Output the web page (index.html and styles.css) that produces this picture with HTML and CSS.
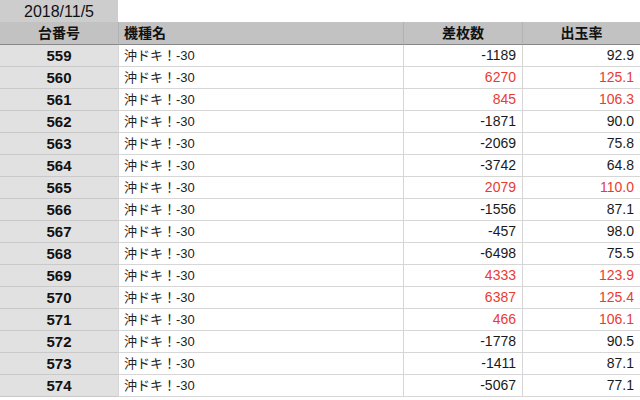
FILE: index.html
```html
<!DOCTYPE html>
<html lang="ja">
<head>
<meta charset="utf-8">
<link rel="stylesheet" href="styles.css">
</head>
<body>
<div class="date">2018/11/5</div>
<div class="sheet">
  <div class="row head"><div class="c1">台番号</div><div class="c2">機種名</div><div class="c3">差枚数</div><div class="c4">出玉率</div></div>
  <div class="row"><div class="c1">559</div><div class="c2">沖ドキ！-30</div><div class="c3">-1189</div><div class="c4">92.9</div></div>
  <div class="row plus"><div class="c1">560</div><div class="c2">沖ドキ！-30</div><div class="c3">6270</div><div class="c4">125.1</div></div>
  <div class="row plus"><div class="c1">561</div><div class="c2">沖ドキ！-30</div><div class="c3">845</div><div class="c4">106.3</div></div>
  <div class="row"><div class="c1">562</div><div class="c2">沖ドキ！-30</div><div class="c3">-1871</div><div class="c4">90.0</div></div>
  <div class="row"><div class="c1">563</div><div class="c2">沖ドキ！-30</div><div class="c3">-2069</div><div class="c4">75.8</div></div>
  <div class="row"><div class="c1">564</div><div class="c2">沖ドキ！-30</div><div class="c3">-3742</div><div class="c4">64.8</div></div>
  <div class="row plus"><div class="c1">565</div><div class="c2">沖ドキ！-30</div><div class="c3">2079</div><div class="c4">110.0</div></div>
  <div class="row"><div class="c1">566</div><div class="c2">沖ドキ！-30</div><div class="c3">-1556</div><div class="c4">87.1</div></div>
  <div class="row"><div class="c1">567</div><div class="c2">沖ドキ！-30</div><div class="c3">-457</div><div class="c4">98.0</div></div>
  <div class="row"><div class="c1">568</div><div class="c2">沖ドキ！-30</div><div class="c3">-6498</div><div class="c4">75.5</div></div>
  <div class="row plus"><div class="c1">569</div><div class="c2">沖ドキ！-30</div><div class="c3">4333</div><div class="c4">123.9</div></div>
  <div class="row plus"><div class="c1">570</div><div class="c2">沖ドキ！-30</div><div class="c3">6387</div><div class="c4">125.4</div></div>
  <div class="row plus"><div class="c1">571</div><div class="c2">沖ドキ！-30</div><div class="c3">466</div><div class="c4">106.1</div></div>
  <div class="row"><div class="c1">572</div><div class="c2">沖ドキ！-30</div><div class="c3">-1778</div><div class="c4">90.5</div></div>
  <div class="row"><div class="c1">573</div><div class="c2">沖ドキ！-30</div><div class="c3">-1411</div><div class="c4">87.1</div></div>
  <div class="row"><div class="c1">574</div><div class="c2">沖ドキ！-30</div><div class="c3">-5067</div><div class="c4">77.1</div></div>
</div>
</body>
</html>
```
FILE: styles.css
```css
html, body {
  margin: 0;
  padding: 0;
  background: #ffffff;
  font-family: "Liberation Sans", "Noto Sans CJK JP", sans-serif;
  font-size: 14px;
  color: #1a1a1a;
  overflow: hidden;
}
.date {
  width: 118px;
  height: 22px;
  line-height: 23px;
  text-align: center;
  background: #cdcdcd;
  font-size: 16px;
  color: #111;
}
.sheet {
  width: 640px;
}
.row {
  display: grid;
  grid-template-columns: 118px 285px 119px 118px;
  height: 22px;
}
.row > div {
  box-sizing: border-box;
  height: 22px;
  line-height: 21px;
  white-space: nowrap;
  overflow: hidden;
  border-left: 1px solid #d6d6d6;
  border-bottom: 1px solid #d6d6d6;
}
.row > div:first-child { border-left: none; }
.row.head { height: 23px; }
.row.head > div {
  height: 23px;
  line-height: 22px;
  background: #c2c2c2;
  font-weight: bold;
  font-size: 14px;
  color: #111;
  border-left-color: #b2b2b2;
  border-bottom-color: #878787;
}
.row.head > div:first-child { border-left: none; }
.c1 { text-align: center; }
.head .c2 { text-align: left; padding-left: 5px; }
.head .c3, .head .c4 { text-align: center; }
.row > .c1 {
  font-weight: bold;
  font-size: 15px;
  color: #111;
}
.row:not(.head) > .c1 {
  background: #e1e1e1;
  border-bottom-color: #c9c9c9;
}
.row:not(.head) > .c2 {
  padding-left: 5px;
  font-size: 13px;
  color: #222;
}
.row:not(.head) > .c3,
.row:not(.head) > .c4 {
  text-align: right;
  padding-right: 6px;
  font-size: 14px;
  color: #1a1a1a;
}
.row.plus > .c3, .row.plus > .c4 { color: #ea3b32; }
```
